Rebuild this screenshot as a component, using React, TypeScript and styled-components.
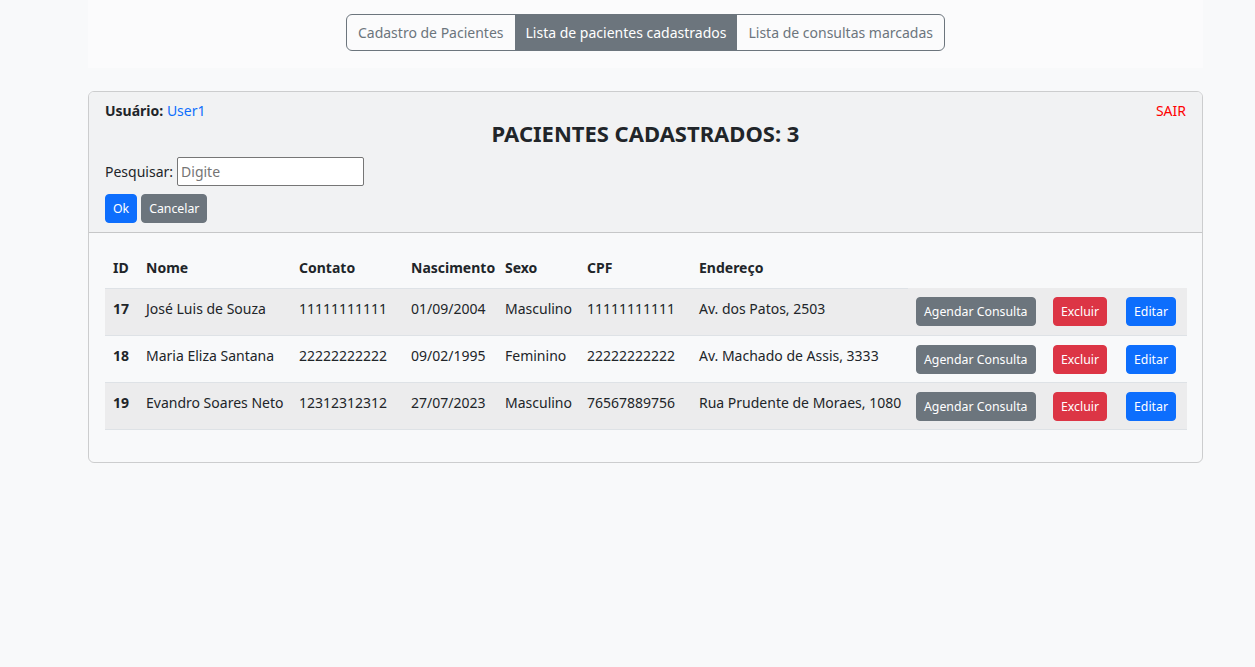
import React from "react";
import styled, { createGlobalStyle } from "styled-components";

const Global = createGlobalStyle`
  html, body { margin: 0; padding: 0; }
  body {
    background: #f8f9fa;
    color: #212529;
    font-family: "Noto Sans", sans-serif;
    font-size: 14px;
    line-height: 1.5;
  }
  * { box-sizing: border-box; }
`;

const Page = styled.div`
  width: 1255px;
  min-height: 667px;
  padding: 0 52px 0 88px;
`;

const TopBar = styled.nav`
  background: #fbfbfc;
  height: 68px;
  padding-top: 14px;
  display: flex;
  justify-content: center;
  align-items: flex-start;
`;

const Group = styled.div`
  display: inline-flex;
  border: 1px solid #6c757d;
  border-radius: 6px;
  overflow: hidden;
  height: 37px;
`;

const GroupBtn = styled.button<{ $active?: boolean }>`
  font-family: inherit;
  font-size: 14px;
  border: none;
  padding: 0 11px;
  background: ${(p) => (p.$active ? "#6c757d" : "transparent")};
  color: ${(p) => (p.$active ? "#fff" : "#6c757d")};
  line-height: 34px;
  cursor: pointer;
  white-space: nowrap;
`;

const Card = styled.section`
  margin-top: 23px;
  border: 1px solid rgba(0, 0, 0, 0.175);
  border-radius: 6px;
  overflow: hidden;
`;

const CardHeader = styled.header`
  background: #f1f2f3;
  border-bottom: 1px solid rgba(0, 0, 0, 0.175);
  padding: 7px 16px 9px;
`;

const UserRow = styled.div`
  display: flex;
  justify-content: space-between;
  height: 20px;
  line-height: 24px;
`;

const Label = styled.span`
  font-weight: 700;
`;

const UserLink = styled.a`
  color: #0d6efd;
  text-decoration: none;
`;

const Logout = styled.a`
  color: #ff0000;
  text-decoration: none;
`;

const Title = styled.h4`
  margin: 0 0 9px;
  text-align: center;
  font-size: 22px;
  font-weight: 700;
  line-height: 29px;
`;

const SearchRow = styled.div`
  display: flex;
  align-items: center;
  gap: 4px;
`;

const SearchInput = styled.input`
  width: 187px;
  height: 29px;
  border: 1px solid #767676;
  border-radius: 2px;
  padding: 1px 3px;
  font-family: inherit;
  font-size: 14px;
  color: #212529;
  background: #fff;
  &::placeholder { color: #757575; }
`;

const Actions = styled.div`
  display: flex;
  gap: 4px;
  margin-top: 8px;
`;

type Variant = "primary" | "secondary" | "danger";
const colors: Record<Variant, string> = {
  primary: "#0d6efd",
  secondary: "#6c757d",
  danger: "#dc3545",
};

const SmallBtn = styled.button<{ $variant: Variant }>`
  font-family: inherit;
  font-size: 12.3px;
  line-height: 19px;
  padding: 4px 7px;
  border: 1px solid ${(p) => colors[p.$variant]};
  border-radius: 4px;
  background: ${(p) => colors[p.$variant]};
  color: #fff;
  cursor: pointer;
  vertical-align: middle;
  white-space: nowrap;
`;

const CardBody = styled.div`
  padding: 16px 16px 32px;
`;

const Table = styled.table`
  width: 100%;
  border-collapse: collapse;
  table-layout: fixed;
`;

const Th = styled.th<{ $border?: boolean }>`
  text-align: left;
  font-weight: 700;
  padding: 6px 8px 8px;
  height: 39px;
  white-space: nowrap;
  border-bottom: ${(p) => (p.$border ? "1px solid #dee2e6" : "none")};
`;

const Tr = styled.tr<{ $striped?: boolean }>`
  background: ${(p) => (p.$striped ? "#ececed" : "transparent")};
  border-bottom: 1px solid #dee2e6;
`;

const Td = styled.td<{ $bold?: boolean }>`
  padding: 9px 8px 5px;
  height: 47px;
  vertical-align: top;
  font-weight: ${(p) => (p.$bold ? 700 : 400)};
  white-space: nowrap;
`;

const BtnTd = styled.td`
  padding: 9px 8px 7px;
  vertical-align: top;
`;

const cols = [33, 153, 112, 94, 82, 112, 217, 137, 73, 69];

const patients = [
  { id: 17, nome: "José Luis de Souza", contato: "11111111111", nasc: "01/09/2004", sexo: "Masculino", cpf: "11111111111", end: "Av. dos Patos, 2503" },
  { id: 18, nome: "Maria Eliza Santana", contato: "22222222222", nasc: "09/02/1995", sexo: "Feminino", cpf: "22222222222", end: "Av. Machado de Assis, 3333" },
  { id: 19, nome: "Evandro Soares Neto", contato: "12312312312", nasc: "27/07/2023", sexo: "Masculino", cpf: "76567889756", end: "Rua Prudente de Moraes, 1080" },
];

const headers = ["ID", "Nome", "Contato", "Nascimento", "Sexo", "CPF", "Endereço"];

export default function App() {
  return (
    <>
      <Global />
      <Page>
        <TopBar>
          <Group>
            <GroupBtn>Cadastro de Pacientes</GroupBtn>
            <GroupBtn $active>Lista de pacientes cadastrados</GroupBtn>
            <GroupBtn>Lista de consultas marcadas</GroupBtn>
          </Group>
        </TopBar>
        <Card>
          <CardHeader>
            <UserRow>
              <span>
                <Label>Usuário:</Label> <UserLink href="#">User1</UserLink>
              </span>
              <Logout href="#">SAIR</Logout>
            </UserRow>
            <Title>PACIENTES CADASTRADOS: 3</Title>
            <SearchRow>
              <span>Pesquisar:</span>
              <SearchInput placeholder="Digite" />
            </SearchRow>
            <Actions>
              <SmallBtn $variant="primary">Ok</SmallBtn>
              <SmallBtn $variant="secondary">Cancelar</SmallBtn>
            </Actions>
          </CardHeader>
          <CardBody>
            <Table>
              <colgroup>
                {cols.map((w, i) => (
                  <col key={i} style={{ width: w }} />
                ))}
              </colgroup>
              <thead>
                <tr>
                  {headers.map((h) => (
                    <Th key={h} $border>{h}</Th>
                  ))}
                  <Th />
                  <Th />
                  <Th />
                </tr>
              </thead>
              <tbody>
                {patients.map((p, i) => (
                  <Tr key={p.id} $striped={i % 2 === 0}>
                    <Td $bold>{p.id}</Td>
                    <Td>{p.nome}</Td>
                    <Td>{p.contato}</Td>
                    <Td>{p.nasc}</Td>
                    <Td>{p.sexo}</Td>
                    <Td>{p.cpf}</Td>
                    <Td>{p.end}</Td>
                    <BtnTd><SmallBtn $variant="secondary">Agendar Consulta</SmallBtn></BtnTd>
                    <BtnTd><SmallBtn $variant="danger">Excluir</SmallBtn></BtnTd>
                    <BtnTd><SmallBtn $variant="primary">Editar</SmallBtn></BtnTd>
                  </Tr>
                ))}
              </tbody>
            </Table>
          </CardBody>
        </Card>
      </Page>
    </>
  );
}
